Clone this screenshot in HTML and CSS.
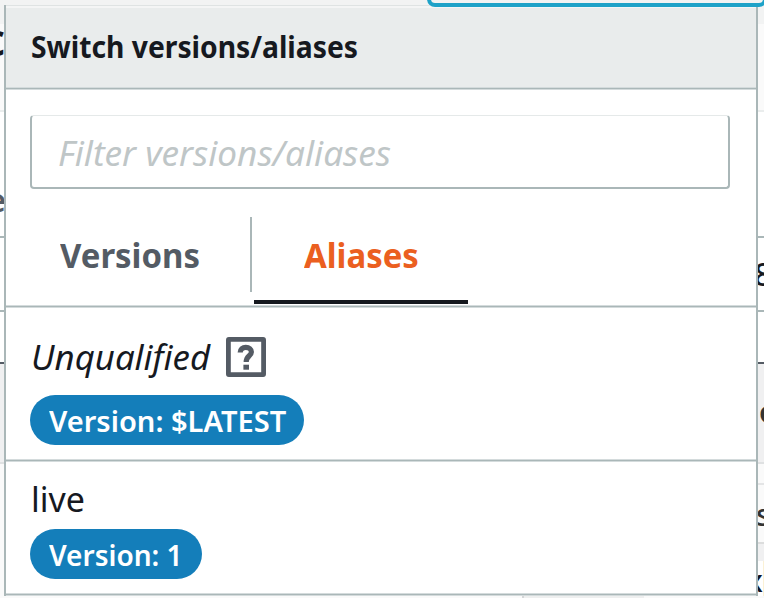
FILE: index.html
```
<!DOCTYPE html>
<html lang="en">
<head>
<meta charset="utf-8">
<title>Switch versions/aliases</title>
<link rel="stylesheet" href="styles.css">
</head>
<body>
<div class="topbar"><div class="focused-button"></div></div>
<main class="stage">
  <div class="behind left">
    <div class="seg shade l1"></div>
    <div class="seg pale l2"><span class="glyph g-c">c</span></div>
    <div class="seg l3"><span class="glyph g-e">e</span></div>
    <div class="seg l4"></div>
    <div class="seg l5"></div>
    <div class="seg grey l6"></div>
    <div class="seg pale l7"></div>
  </div>
  <section class="popover">
    <header class="header"><h1 class="text title">Switch versions/aliases</h1></header>
    <div class="controls">
      <div class="filter"><span class="text placeholder">Filter versions/aliases</span></div>
      <nav class="tabs">
        <a class="tab"><span class="text versions">Versions</span></a>
        <a class="tab active"><span class="text aliases">Aliases</span></a>
      </nav>
    </div>
    <article class="row first">
      <div class="name-line">
        <span class="text unqualified">Unqualified</span>
        <svg class="help" viewBox="0 0 40 40">
          <rect x="2.4" y="2.4" width="35.2" height="35.2" rx="0.5" fill="none" stroke="#545b64" stroke-width="4.8"/>
          <path d="M14.2 15.6C14.2 12.2 16.6 10.4 19.8 10.4C23.2 10.4 25.4 12.2 25.4 15C25.4 19 20.2 18.8 20.2 25" fill="none" stroke="#545b64" stroke-width="5.2"/>
          <rect x="17.4" y="27.7" width="5.6" height="5" fill="#545b64"/>
        </svg>
      </div>
      <div class="badge latest"><span class="text badge-latest">Version: $LATEST</span></div>
    </article>
    <article class="row second">
      <div class="name-line"><span class="text live">live</span></div>
      <div class="badge one"><span class="text badge-one">Version: 1</span></div>
    </article>
  </section>
  <div class="behind right">
    <div class="seg shade r1"></div>
    <div class="seg pale r2"></div>
    <div class="seg r3"></div>
    <div class="seg r4"><span class="glyph g-8">8</span></div>
    <div class="seg r5"></div>
    <div class="seg grey r6"><span class="glyph g-o">o</span></div>
    <div class="seg pale r7"></div>
    <div class="seg pale r8"><span class="glyph g-s">s</span></div>
    <div class="seg grey r9"></div>
    <div class="seg r10"><span class="glyph g-x">x</span></div>
  </div>
</main>
<div class="footer"><div class="footer-block"></div></div>
</body>
</html>
```
FILE: styles.css
```
*, *::after { box-sizing: border-box; }
html, body { margin: 0; height: 598px; overflow: hidden; }
body {
  width: 764px;
  position: relative;
  background: #fafafa;
  color: #16191f;
  font-family: "Noto Sans", "Open Sans", sans-serif;
}
.topbar { height: 5px; background: #f2f3f3; }
/* The button's lower edge overlaps the popover's top edge. */
.focused-button {
  position: absolute;
  z-index: 3;
  left: 427px;
  top: -34px;
  width: 340px;
  height: 41px;
  border: 4px solid #1ea2c8;
  border-radius: 8px;
}
.stage { display: flex; height: 591px; }
.behind { flex: none; display: flex; flex-direction: column; overflow: hidden; }
.left { width: 4px; }
.right { width: 6px; }
.seg { flex: none; position: relative; background: #fff; overflow: hidden; }
.shade { background: #f2f3f3; }
.pale { background: #fafafa; }
.grey { background: #f0f0f1; }
.l1, .r1 { height: 19px; }
.l2, .r2 { height: 88px; border-bottom: 2px solid #eaeded; }
.l3, .r3 { height: 126px; border-bottom: 2px solid #aab7b8; }
.l4, .r4 { height: 74px; border-bottom: 2px solid #aab7b8; }
.l5, .r5 { height: 52px; border-bottom: 2px solid #545b64; }
.l6, .r6 { height: 100px; border-bottom: 2px solid #dfe1e2; }
.l7 { height: 132px; }
.r7 { height: 21px; border-bottom: 2px solid #e4e5e6; }
.r8 { height: 59px; border-bottom: 2px solid #dcdddd; }
.r9 { height: 17px; }
.r10 { height: 35px; border-right: 1px solid #fbf1d5; }
.glyph { position: absolute; line-height: 40px; white-space: nowrap; }
.g-c { font-size: 45px; font-weight: 600; right: -1px; top: -5px; }
.g-e { font-size: 32px; right: -2px; top: 68px; color: #545b64; font-weight: 600; }
.g-8 { font-size: 32px; left: -4px; top: 16px; font-weight: 500; }
.g-o { font-size: 30px; left: 1px; top: 28px; color: #333; font-weight: 600; }
.g-s { font-size: 30px; left: -2px; top: 10px; color: #333; font-weight: 500; }
.g-x { font-size: 31px; left: -12px; top: -1px; color: #101525; font-weight: 500; }
.popover {
  width: 754px;
  display: flex;
  flex-direction: column;
  background: #fff;
  border: solid #aab7b8;
  border-width: 0 2px;
}
.header, .controls, .row { position: relative; flex: none; }
.header::after, .controls::after, .row::after {
  content: "";
  position: absolute;
  left: 0;
  right: 0;
  bottom: 0;
  height: 3px;
  background: #aab7b8;
  border: solid #d4dbdc;
  border-width: 1px 0;
}
.header {
  height: 85px;
  padding: 0 0 3px 25px;
  display: flex;
  align-items: center;
  background: #e9ecec;
  border-top: 1px solid #dfe3e3;
  box-shadow: inset 0 2px #f4f5f5;
}
.text {
  display: block;
  white-space: nowrap;
  transform-origin: 0 50%;
  line-height: 40px;
}
.title { margin: 1px 0 0; font-size: 30px; font-weight: 700; transform: scaleX(0.942); }
.controls { height: 218px; padding: 25px 26px 0 24px; }
.filter {
  height: 74px;
  border: 2px solid #aab7b8;
  border-top: 1px solid #e5e9e9;
  border-radius: 4px;
  padding: 17px 0 0 26px;
}
.placeholder { font-size: 34px; font-style: italic; color: #bfc6c7; transform: scaleX(1.033); }
.tabs { display: flex; height: 87px; margin-top: 28px; }
.tab { display: block; padding: 18px 0 0 30px; }
.tab:first-child { width: 222px; height: 75px; border-right: 2px solid #aab7b8; }
.tab.active { width: 214px; margin-left: 2px; padding-left: 50px; border-bottom: 4px solid #16191f; }
.versions, .aliases { font-size: 34px; font-weight: 700; transform: scaleX(0.968); }
.versions { color: #545b64; }
.aliases { color: #eb5f20; }
.row { padding-left: 24px; }
.first { height: 154px; padding-top: 29px; }
.second { flex: 1; padding-top: 17px; }
.name-line { display: flex; height: 40px; }
.unqualified { width: 196px; margin-left: 1px; font-size: 34px; font-style: italic; transform: scaleX(1.022); }
.help { width: 40px; height: 40px; margin-left: -1px; flex: none; }
.live { font-size: 34px; margin-left: 1px; }
.badge { height: 50px; border-radius: 25px; background: #147eba; color: #fff; padding: 6px 0 0 19px; }
.latest { width: 274px; margin-top: 18.4px; }
.one { width: 172px; margin-top: 10.4px; }
.badge-latest, .badge-one { font-size: 29.5px; font-weight: 600; }
.badge-latest { transform: scaleX(0.985); }
.badge-one { transform: scaleX(0.95); }
.footer { height: 2px; background: #fafafa; padding-left: 522px; }
.footer-block { width: 122px; height: 2px; background: #eeefef; border-left: 2px solid #d5d7d8; }
```
